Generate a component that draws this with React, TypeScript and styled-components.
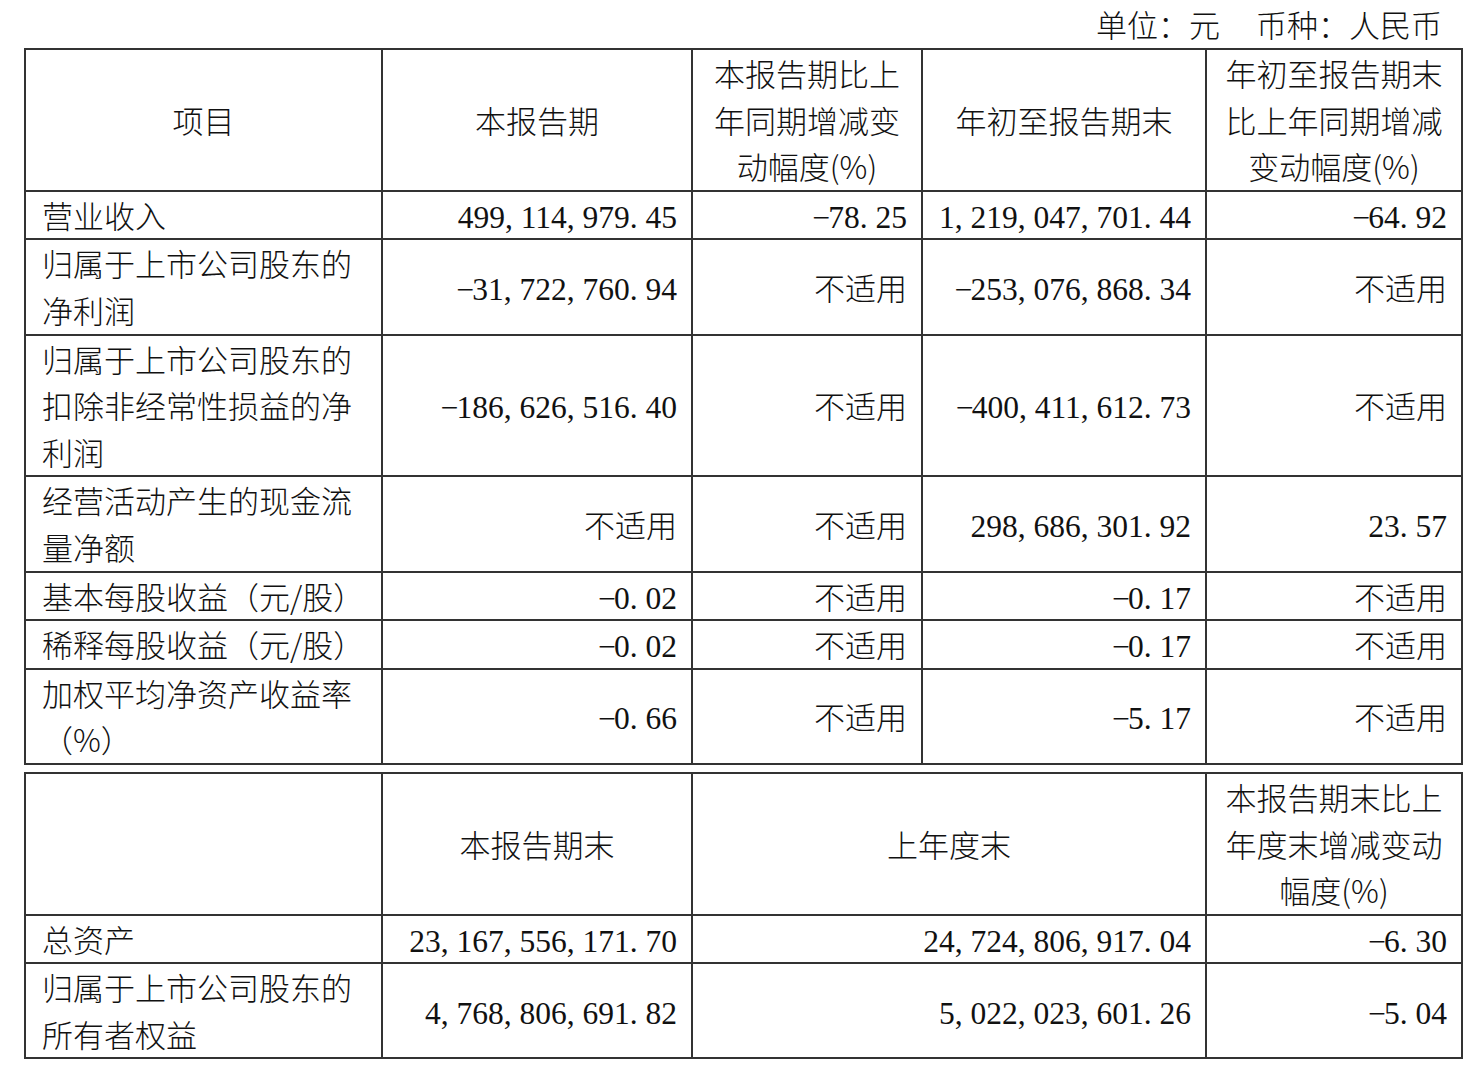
import React from "react";
import styled, { createGlobalStyle } from "styled-components";

const GlobalStyle = createGlobalStyle`
  html, body {
    margin: 0;
    padding: 0;
    background: #fff;
  }
  body {
    font-family: "Noto Sans CJK SC", "Noto Sans", sans-serif;
    font-weight: 300;
    color: #111;
  }
`;

const Page = styled.div`
  width: 1470px;
  padding-left: 24px;
  box-sizing: border-box;
`;

const UnitLine = styled.div`
  width: 1436px;
  display: flex;
  justify-content: flex-end;
  gap: 36px;
  height: 48px;
  line-height: 48px;
  font-size: 31px;
  padding-right: 18px;
  box-sizing: border-box;
`;

const Table = styled.table`
  width: 1437px;
  border-collapse: collapse;
  table-layout: fixed;
  font-size: 31px;
  line-height: 46.6px;

  & + & {
    margin-top: 7px;
  }
`;

type Align = "left" | "right" | "center";

const Cell = styled.td<{ $align?: Align }>`
  border: 2px solid #333;
  padding: 0 14px 0 16px;
  text-align: ${(p) => p.$align || "right"};
  vertical-align: middle;
  white-space: nowrap;
`;

const HeadCell = styled(Cell)`
  text-align: center;
  padding: 0 4px;
`;

const NumText = styled.span`
  font-family: "Liberation Serif", serif;
  font-weight: 400;
  font-size: 31.5px;
  line-height: 1;
`;

const Punct = styled.span<{ $minus?: boolean }>`
  display: inline-block;
  width: 0.5em;
  line-height: 1;
  text-align: ${(p) => (p.$minus ? "center" : "left")};
`;

const Num = ({ v }: { v: string }) => (
  <NumText>
    {[...v].map((c, i) =>
      /[0-9]/.test(c) ? (
        c
      ) : (
        <Punct key={i} $minus={c === "-"}>
          {c === "-" ? "−" : c}
        </Punct>
      )
    )}
  </NumText>
);

const NA = "不适用";

const val = (v: string) => (v === NA ? v : <Num v={v} />);

type Row = { label: React.ReactNode; cells: string[] };

const rows1: Row[] = [
  { label: "营业收入", cells: ["499,114,979.45", "-78.25", "1,219,047,701.44", "-64.92"] },
  {
    label: <>归属于上市公司股东的<br />净利润</>,
    cells: ["-31,722,760.94", NA, "-253,076,868.34", NA],
  },
  {
    label: <>归属于上市公司股东的<br />扣除非经常性损益的净<br />利润</>,
    cells: ["-186,626,516.40", NA, "-400,411,612.73", NA],
  },
  {
    label: <>经营活动产生的现金流<br />量净额</>,
    cells: [NA, NA, "298,686,301.92", "23.57"],
  },
  { label: "基本每股收益（元/股）", cells: ["-0.02", NA, "-0.17", NA] },
  { label: "稀释每股收益（元/股）", cells: ["-0.02", NA, "-0.17", NA] },
  {
    label: <>加权平均净资产收益率<br />（%）</>,
    cells: ["-0.66", NA, "-5.17", NA],
  },
];

const rows2: Row[] = [
  { label: "总资产", cells: ["23,167,556,171.70", "24,724,806,917.04", "-6.30"] },
  {
    label: <>归属于上市公司股东的<br />所有者权益</>,
    cells: ["4,768,806,691.82", "5,022,023,601.26", "-5.04"],
  },
];

export default function App() {
  return (
    <>
      <GlobalStyle />
      <Page>
        <UnitLine>
          <span>单位：元</span>
          <span>币种：人民币</span>
        </UnitLine>

        <Table>
          <colgroup>
            <col style={{ width: 357 }} />
            <col style={{ width: 310 }} />
            <col style={{ width: 230 }} />
            <col style={{ width: 284 }} />
            <col style={{ width: 256 }} />
          </colgroup>
          <tbody>
            <tr>
              <HeadCell>项目</HeadCell>
              <HeadCell>本报告期</HeadCell>
              <HeadCell>本报告期比上<br />年同期增减变<br />动幅度(%)</HeadCell>
              <HeadCell>年初至报告期末</HeadCell>
              <HeadCell>年初至报告期末<br />比上年同期增减<br />变动幅度(%)</HeadCell>
            </tr>
            {rows1.map((r, i) => (
              <tr key={i}>
                <Cell $align="left">{r.label}</Cell>
                {r.cells.map((c, j) => (
                  <Cell key={j}>{val(c)}</Cell>
                ))}
              </tr>
            ))}
          </tbody>
        </Table>

        <Table>
          <colgroup>
            <col style={{ width: 357 }} />
            <col style={{ width: 310 }} />
            <col style={{ width: 514 }} />
            <col style={{ width: 256 }} />
          </colgroup>
          <tbody>
            <tr>
              <HeadCell></HeadCell>
              <HeadCell>本报告期末</HeadCell>
              <HeadCell>上年度末</HeadCell>
              <HeadCell>本报告期末比上<br />年度末增减变动<br />幅度(%)</HeadCell>
            </tr>
            {rows2.map((r, i) => (
              <tr key={i}>
                <Cell $align="left">{r.label}</Cell>
                {r.cells.map((c, j) => (
                  <Cell key={j}>{val(c)}</Cell>
                ))}
              </tr>
            ))}
          </tbody>
        </Table>
      </Page>
    </>
  );
}
